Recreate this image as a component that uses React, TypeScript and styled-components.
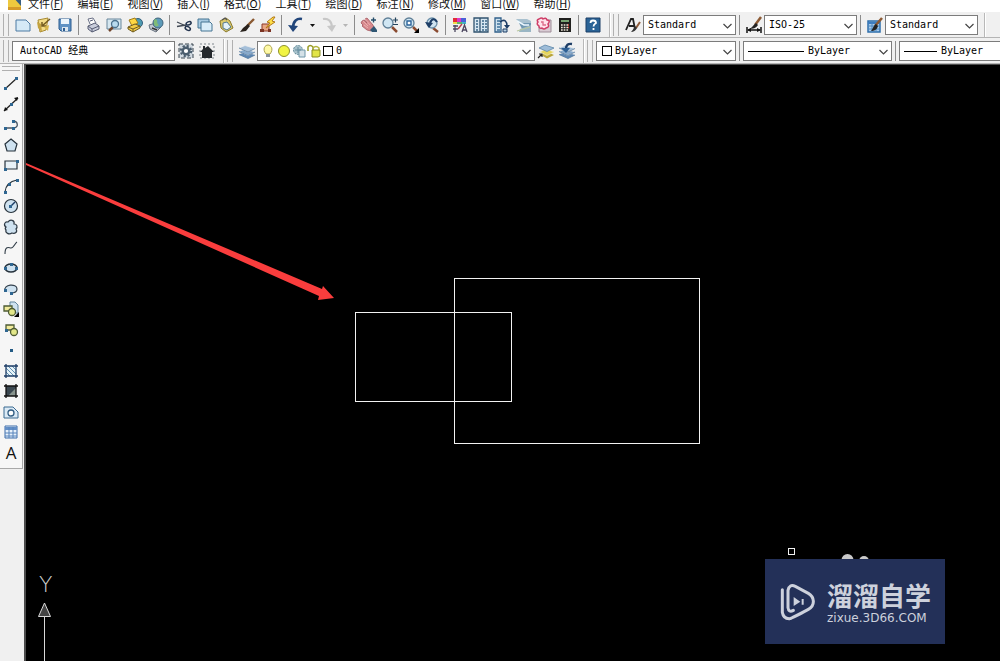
import React from 'react';
import styled, { createGlobalStyle } from 'styled-components';

const GlobalStyle = createGlobalStyle`
  body { margin: 0; background: #f0f0f0; }
  * { box-sizing: border-box; }
`;

const mono = `"DejaVu Sans Mono", "Noto Sans CJK SC", monospace`;
const sans = `"Open Sans", "Noto Sans CJK SC", sans-serif`;

const Window = styled.div`
  display: flex;
  flex-direction: column;
  height: 100vh;
  overflow: hidden;
  background: #f0f0f0;
  color: #000;
  font-family: ${sans};
`;

const MenuBar = styled.nav`
  display: flex;
  align-items: flex-end;
  flex: none;
  gap: 14px;
  height: 12px;
  padding: 0 8px 2px;
  overflow: hidden;
  background: #fff;
`;

const MenuItem = styled.button`
  flex: none;
  padding: 0;
  border: 0;
  background: none;
  color: #111;
  font: 11px/14px "Noto Sans CJK SC", sans-serif;
  white-space: nowrap;
`;

const AppIcon = styled.svg`
  flex: none;
  width: 13px;
  height: 14px;
  margin-right: -7px;
`;

const ToolRow = styled.div`
  display: flex;
  flex: none;
  height: 26px;
  padding-top: 1px;
  border-bottom: 1px solid #b4b4b4;
  overflow: hidden;
`;

const Group = styled.div`
  display: flex;
  align-items: center;
  flex: none;
  padding: 0 6px 0 3px;
  border-right: 1px solid #b8b8b8;
  box-shadow: 1px 0 #fff;
`;

const Grip = styled.span<{ $flat?: boolean }>`
  flex: none;
  width: ${p => (p.$flat ? '18px' : '6px')};
  height: ${p => (p.$flat ? '5px' : '22px')};
  margin: ${p => (p.$flat ? '2px' : '0 3px 0 0')};
  border: solid #b0b0b0;
  border-width: ${p => (p.$flat ? '1px 0' : '0 1px')};
`;

const Divider = styled.span`
  flex: none;
  width: 1px;
  height: 20px;
  margin: 0 3px;
  background: #8c8c8c;
`;

const ToolButton = styled.button<{ $narrow?: boolean }>`
  display: flex;
  align-items: center;
  justify-content: center;
  flex: none;
  width: ${p => (p.$narrow ? '12px' : '21px')};
  height: 22px;
  padding: 0;
  border: 0;
  background: none;
`;

const Icon = styled.svg`
  display: block;
  flex: none;
  width: 16px;
  height: 16px;
  overflow: visible;
`;

const Combo = styled.div<{ $w: number }>`
  position: relative;
  display: flex;
  align-items: center;
  flex: none;
  width: ${p => p.$w}px;
  height: 20px;
  padding-left: 4px;
  border: 1px solid #7c7c7c;
  background: #fff;
`;

const ComboSelect = styled.select<{ $indent?: number }>`
  flex: 1;
  min-width: 0;
  height: 18px;
  padding: 0 0 0 ${p => p.$indent || 0}px;
  border: 0;
  outline: 0;
  appearance: none;
  background: none;
  color: #000;
  font: 10px/18px ${mono};
`;

const Chevron = styled.svg`
  position: absolute;
  right: 3px;
  top: 6px;
  width: 9px;
  height: 8px;
  pointer-events: none;
`;

const LineSample = styled.span<{ $w: number }>`
  flex: none;
  width: ${p => p.$w}px;
  height: 1px;
  margin-right: 4px;
  background: #000;
`;

const Swatch = styled.span`
  flex: none;
  width: 10px;
  height: 10px;
  margin: 0 3px 0 1px;
  border: 1px solid #000;
`;

const LayerIcon = styled.svg`
  flex: none;
  width: 14px;
  height: 14px;
  margin-right: 1px;
`;

const Work = styled.main`
  display: flex;
  flex: 1;
  min-height: 0;
`;

const Side = styled.aside`
  flex: none;
  width: 26px;
  border-right: 2px solid #4c4c4c;
`;

const DrawBar = styled.div`
  display: flex;
  flex-direction: column;
  width: 23px;
  padding-bottom: 5px;
  border: solid #a8a8a8;
  border-width: 0 1px 1px 0;
  background: #f6f6f6;
`;

const DrawList = styled.div`
  display: flex;
  flex-direction: column;
  height: 390px;
`;

const DrawButton = styled.button`
  display: flex;
  align-items: center;
  justify-content: center;
  flex: 1;
  min-height: 0;
  padding: 0;
  border: 0;
  background: none;
  font: 17px/20px ${sans};
  color: #111;
`;

const Canvas = styled.section`
  position: relative;
  flex: 1;
  min-width: 0;
  border-top: 1px solid #4c4c4c;
  background: #000;
  overflow: hidden;
`;

const Drawing = styled.svg`
  position: absolute;
  inset: 0;
  width: 100%;
  height: 100%;
`;

const Watermark = styled.div`
  position: absolute;
  right: 55px;
  bottom: 17px;
  display: flex;
  align-items: center;
  gap: 12px;
  width: 180px;
  height: 85px;
  padding-left: 15px;
  background: #233058;
  color: #cdd1dc;
`;

const Logo = styled.svg`
  flex: none;
  width: 35px;
  height: 38px;
`;

const BrandBlock = styled.div`
  padding-bottom: 4px;
`;

const Brand = styled.div`
  font: 700 26px/38px "Noto Sans CJK SC", sans-serif;
  white-space: nowrap;
`;

const Site = styled.div`
  margin-top: -2px;
  font: 12px/12px "DejaVu Sans", sans-serif;
`;

const navy = '#1d3d66';
const steel = '#3f719c';
const pale = '#cfe2f0';

const page = <path d="M1 3h10l4 4v7H1z" fill="#d5e9f6" stroke="#4d7ba3" />;
const lens = (
  <>
    <path d="M10 10l5 5" stroke="#8a4a30" strokeWidth="2.5" />
    <circle cx="6" cy="6" r="5" fill="#d0e6f3" stroke="#5f7f97" strokeWidth="1.3" />
  </>
);
const stack = (
  <>
    <path d="M0 11.500l6-2.500 10 3-7 3.500z" fill="#5c86b4" />
    <path d="M0 8.500L6 6l10 3-7 3.500z" fill="#86a9cc" stroke="#f0f0f0" strokeWidth=".7" />
    <path d="M0 5l6-2.500 10 3L9 9z" fill="#a4bfd9" stroke="#f0f0f0" strokeWidth=".7" />
    <path d="M0 5l9 4 7-3.500M0 8.500l9 4L16 9M0 11.500l9 4 7-3.500" stroke="#4f7599" strokeWidth=".8" />
  </>
);
const brush = (
  <>
    <path d="M15 1L8 9" stroke="#8c5a34" strokeWidth="2.5" />
    <path d="M9 7l2 2c-1 4-4 5-7 5 2-2 2-5 5-7z" fill="#222" />
  </>
);

const icons: Record<string, React.ReactNode> = {
  new: page,
  open: (
    <>
      <path d="M2 3l10-2-2 12-6 2z" fill="#f3dc87" stroke="#a88a32" />
      <path d="M1 5l4 2 1 8-4-4z" fill="#c4a23e" />
      <path d="M14 2L6 9m0-4v4h4" stroke="#735b20" fill="none" strokeWidth="1.5" />
      <path d="M8 10l5-2-1 6z" fill="#d8b74c" />
    </>
  ),
  save: (
    <>
      <path d="M2 2h12v12H4l-2-2z" fill="#5e92c4" stroke="#2c5c90" />
      <path d="M4 2h8v5H4z" fill="#eaf4fb" />
      <path d="M5 10h6v4H5z" fill="#dbe7f0" />
      <path d="M6 11h2v3H6z" fill="#2c5c90" />
    </>
  ),
  print: (
    <>
      <path d="M5 7L3 2l5-1 3 5" fill="#fff" stroke="#6b7187" />
      <path d="M3 9l7-3 4 3v3l-7 3-4-3z" fill="#c9cddb" stroke="#565c73" />
      <path d="M3 9l4 3 7-3M7 12v3M5 4l3-1" fill="none" stroke="#565c73" />
    </>
  ),
  preview: (
    <>
      <path d="M1 2h14v10H1z" fill="#d6e7f0" stroke="#68879c" />
      <path d="M3 14l4-4" stroke="#70452c" strokeWidth="2.5" />
      <circle cx="9" cy="7" r="3.5" fill="#b8daee" stroke="#4c718d" strokeWidth="1.3" />
    </>
  ),
  publish: (
    <>
      <circle cx="11" cy="6" r="4.5" fill="#4e9bb2" stroke="#345f7c" />
      <path d="M2 3l6-2 3 5-6 3z" fill="#ffd743" stroke="#a07c17" />
      <path d="M1 10l7-3 5 2v2l-7 4-5-3z" fill="#f4cd44" stroke="#6e5a20" />
      <path d="M1 10l5 2 7-3M6 12v3" fill="none" stroke="#6e5a20" />
    </>
  ),
  globe: (
    <>
      <path d="M1 8l7-2 5 4-5 5-6-3z" fill="#c1c8d0" stroke="#68727f" />
      <circle cx="10" cy="6" r="5" fill="#5d9bb9" stroke="#40647c" />
      <path d="M7 2c4 1 1 3 3 5s-2 3-3 2-2-5 0-7z" fill="#80bb76" />
      <path d="M4 11l5 2" stroke="#333" strokeWidth="1.5" />
    </>
  ),
  cut: (
    <>
      <path d="M1 5l9 4M1 9.500l9-1.500" stroke="#424a55" strokeWidth="1.3" />
      <ellipse cx="12" cy="11.500" rx="2.800" ry="1.700" fill="none" stroke="#24354f" strokeWidth="1.500" transform="rotate(30 12 11)" />
      <ellipse cx="12.500" cy="6.500" rx="2.600" ry="1.500" fill="none" stroke="#24354f" strokeWidth="1.500" transform="rotate(-20 12 6)" />
    </>
  ),
  copy: (
    <>
      <path d="M1 2h11v9H1z" fill="#a9cbe2" stroke="#457593" />
      <path d="M4 5h9l2 2v7H4z" fill="#d9edf9" stroke="#457593" />
    </>
  ),
  paste: (
    <>
      <path d="M2 4l6-3 4 3 3 7-7 4-5-4z" fill="#dbc96c" stroke="#8a792c" />
      <path d="M5 6l4-1 4 5-4 3-4-2z" fill="#e4f2f8" stroke="#547b91" />
      <path d="M4 3l3-2 2 2" fill="none" stroke="#555" strokeWidth="1.3" />
    </>
  ),
  match: (
    <>
      <path d="M15 2L8 9" stroke="#8a5932" strokeWidth="2.4" />
      <path d="M9 7l2 2-4 5-6 1 3-4z" fill="#28221c" />
    </>
  ),
  block: (
    <>
      <path d="M2 7h7v7H2z" fill="#e8a584" stroke="#8c3a28" />
      <path d="M13 0L7 5l3 1-4 5 9-6-3-1 3-4z" fill="#ffe04a" stroke="#b17818" />
      <path d="M0 12h4v3H0zM8 12h3v3H8z" fill="#7b3424" />
    </>
  ),
  undo: (
    <>
      <path d="M14 2C9 1 5 4 5 11" fill="none" stroke="#21457a" strokeWidth="2.6" />
      <path d="M0 8l5 7 5-6z" fill="#21457a" />
    </>
  ),
  redo: (
    <>
      <path d="M2 2c5-1 9 2 9 9" fill="none" stroke="#c7c7c7" strokeWidth="2.2" />
      <path d="M6 9l5 6 4-7z" fill="#c7c7c7" />
    </>
  ),
  pan: (
    <>
      <path d="M1 4l2-1 3 3-2-4 2-1 6 7 1 3-3 3-4-1-5-4 1-1-2-2z" fill="#d6898d" stroke="#a4585f" strokeWidth=".8" />
      <path d="M2 4l5 5M4 2l5 6M3 8l4 3" stroke="#f0b7b6" strokeWidth=".8" />
      <path d="M9 13l4-4 3 4v2h-5z" fill="#2f5673" />
      <path d="M10 3h5M12.500 .5v5" stroke="#254d6a" strokeWidth="1.400" />
    </>
  ),
  zoom: (
    <>
      {lens}
      <path d="M11 3h5M13.500 .5v5M11 7.500h5" stroke="#24445d" strokeWidth="1.200" />
    </>
  ),
  zoomWindow: (
    <>
      {lens}
      <path d="M4 4h4v4H4z" fill="#fff" stroke="#2d649b" strokeWidth="1.400" />
      <path d="M16 11v5h-5z" fill="#000" />
    </>
  ),
  zoomPrev: (
    <>
      <path d="M9 11l5 4" stroke="#8a4a30" strokeWidth="2.500" />
      <circle cx="8" cy="6" r="5" fill="#cfe3f0" stroke="#6c90aa" strokeWidth="1.300" />
      <path d="M13 5Q9-1 6 6" fill="none" stroke={navy} strokeWidth="2.200" />
      <path d="M1 5l8 1-4 5z" fill={navy} />
    </>
  ),
  props: (
    <>
      <path d="M1 1h4v4H1z" fill="#e32c38" />
      <path d="M5 1h4v4H5z" fill="#d93ac7" />
      <path d="M9 1h5v4H9z" fill="#4a60d7" />
      <path d="M1 5h4v2H1z" fill="#f0d84a" />
      <path d="M5 5h5v2H5z" fill="#62b769" />
      <path d="M10 5h4v2h-4z" fill="#3fb7c6" />
      <path d="M1 9h5M1 12h5M3 8v7M10 15l2.500-7 2.500 7M11 13h3" fill="none" stroke="#4d4760" strokeWidth="1.3" />
      <path d="M6 12l4-5" stroke="#b54052" strokeWidth="1.5" />
    </>
  ),
  design: (
    <>
      <path d="M1 1h14v14H1z" fill="#d6e6f1" stroke="#31536f" strokeWidth="1.300" />
      <path d="M7 1v14" stroke="#31536f" strokeWidth="1.300" />
      <path d="M3 4h3M3 7h3M3 10h3M3 13h3M9 4h5M9 7h5M9 10h5M9 13h5" stroke="#3a6587" strokeWidth="1.600" strokeDasharray="2 1" />
    </>
  ),
  palettes: (
    <>
      <path d="M1 1h6v14H1z" fill="#cfe2ef" stroke="#31608a" strokeWidth="1.300" />
      <path d="M3 4h3M3 7h3M3 10h3M3 13h3" stroke={steel} strokeWidth="1.600" />
      <path d="M6 5c5-4 7 0 7 4" fill="none" stroke={navy} strokeWidth="1.600" />
      <path d="M10 8h6l-3 4z" fill={navy} />
      <path d="M9 12h4v3H9z" fill="#b8d1e1" stroke={navy} />
    </>
  ),
  sheets: (
    <>
      <path d="M1 2h11l4 2v5H7z" fill="#a9c1cf" />
      <path d="M4 6h12v3L7 12z" fill="#6f97b1" />
      <path d="M5 12l11-4v7H4z" fill="#9ab6c4" />
      <path d="M2 4l7 4h5" stroke="#eff9ff" strokeWidth="1.500" />
      <path d="M2 14l13-4" stroke="#b8c7a0" strokeWidth="1.300" />
    </>
  ),
  markup: (
    <>
      <path d="M3 3h12v12H3z" fill="#d9cbd3" stroke="#9e8d98" />
      <path d="M3 2q3-2 4 0 3-2 4 1 4 0 1 4 2 3-2 4-2 2-4 0-3 1-3-2-3-2-1-4-2-2 1-3z" fill="#ffe1ea" stroke="#cf3d67" strokeWidth="1.500" />
      <path d="M5 5h2v3h3" fill="none" stroke="#dc6b89" strokeWidth="1.300" />
    </>
  ),
  calc: (
    <>
      <path d="M2 1h12v14H2z" fill="#20201e" />
      <path d="M4 3h8v2H4z" fill="#78a573" />
      <path d="M4 8h8M4 10.500h8M4 13h8" stroke="#efe9dc" strokeWidth="1.300" strokeDasharray="1.700 1" />
      <path d="M11 8h1M11 10.500h1" stroke="#ea463d" strokeWidth="1.500" />
    </>
  ),
  help: (
    <>
      <path d="M1 1h14v14H1z" fill="#2a6396" stroke="#1b3f67" />
      <path d="M5.500 6q0-2.500 2.500-2.500 3 0 3 2.500-2.500 1.500-2.500 3.500M8.500 11v2" fill="none" stroke="#fff" strokeWidth="1.800" />
    </>
  ),
  textStyle: (
    <>
      <path d="M1 13L6 2h2l2 10M4 9h6" fill="none" stroke="#222" strokeWidth="1.800" />
      <path d="M15 5l-4 6" stroke="#8e5b39" strokeWidth="2" />
      <path d="M10 9l2 2q-2 4-6 4 2-2 4-6z" fill="#333" />
    </>
  ),
  dimStyle: (
    <>
      <path d="M15 0L9 8" stroke="#8c5a34" strokeWidth="2.500" />
      <path d="M10 6l2 2c-2 3-5 4-9 4 3-1 4-4 7-6z" fill="#222" />
      <path d="M1 10v6M15 10v6M2 13h12" stroke="#111" strokeWidth="1.500" />
      <path d="M1 13l4-2v4zM15 13l-4-2v4z" fill="#111" />
    </>
  ),
  tableStyle: (
    <>
      <path d="M1 4h12v11H1z" fill="#a9cbea" stroke="#2e6fac" strokeWidth="1.500" />
      <path d="M1 5h12v2H1z" fill="#3c7cc0" />
      <path d="M1 9h12M1 12h12M5 6v9M9 6v9" stroke="#4b86c0" />
      {brush}
    </>
  ),
  gear: (
    <>
      <path d="M1 1h14v14H1z" fill="#d2dae1" stroke="#39444e" strokeDasharray="4 2" />
      <circle cx="8" cy="8" r="5.200" stroke="#4a5d6e" strokeWidth="2" strokeDasharray="2.200 1.880" />
      <circle cx="8" cy="8" r="3.300" fill="#fff" stroke="#4a5d6e" strokeWidth="2.400" />
    </>
  ),
  home: (
    <>
      <path d="M1 1h14v14H1z" fill="none" stroke="#7f868c" strokeDasharray="2 2" />
      <path d="M1 9l3-3V3h2v2l3-2 6 6h-2v6H3V9z" fill="#25292d" />
    </>
  ),
  layers: stack,
  layerCurrent: (
    <>
      <path d="M3 12l6-3 7 3-7 3.500z" fill="#b9a53a" />
      <path d="M2 9l6-3 8 3-7 3.500z" fill="#e6d55c" stroke="#f4f0c8" strokeWidth=".6" />
      <path d="M1 5l6-3 9 3-7 3.500z" fill="#9dbcd8" stroke="#5d86a8" strokeWidth=".8" />
      <path d="M0 15l4-4M1 11h3v3" stroke="#222" fill="none" strokeWidth="1.200" />
    </>
  ),
  layerPrev: (
    <>
      {stack}
      <path d="M13 1Q7 0 7 6" stroke={navy} strokeWidth="2.300" fill="none" />
      <path d="M2 5h9l-4 5z" fill="#2d5f94" />
    </>
  ),
};

const node = (x: number, y: number) => <rect x={x - 1} y={y - 1} width="3" height="3" fill="#2f6691" />;

const drawTools: [string, React.ReactNode][] = [
  ['直线', <><path d="M2 14L14 3" stroke="#222" strokeWidth="1.200" />{node(2, 13)}{node(13, 3)}</>],
  ['构造线', <><path d="M1 15L15 2" stroke="#222" strokeWidth="1.300" /><path d="M1 15l1-4 3 3zM15 1l-4 1 3 3z" fill="#111" />{node(8, 8)}</>],
  ['多段线', <><path d="M2 12h9c5-1 4-7-1-7" fill="none" stroke="#485461" strokeWidth="1.300" />{node(2, 12)}{node(10, 12)}{node(10, 5)}</>],
  ['多边形', <path d="M8 2l6 5-2 7H4L2 7z" fill={pale} stroke="#26323c" strokeWidth="1.200" />],
  ['矩形', <><path d="M2 4h12v8H2z" fill="#e8f1f7" stroke="#26323c" strokeWidth="1.200" />{node(2, 12)}{node(14, 4)}</>],
  ['圆弧', <><path d="M2 14Q3 4 14 2" fill="none" stroke="#26323c" strokeWidth="1.200" />{node(2, 14)}{node(6, 6)}{node(14, 2)}</>],
  ['圆', <><circle cx="8" cy="8" r="6.500" fill={pale} stroke="#26323c" strokeWidth="1.200" /><path d="M8 8l4-4" stroke={navy} strokeWidth="1.500" />{node(7, 8)}</>],
  ['修订云线', <path d="M3 8c-3-2-1-6 2-5 2-3 7-2 6 2 3 0 4 3 2 5 2 3-1 5-4 4-3 2-7 0-6-3-1-1-1-2 0-3z" fill={pale} stroke="#303c47" strokeWidth="1.200" />],
  ['样条曲线', <path d="M2 14c0-9 4-6 6-6 3 0 4-5 6-6" fill="none" stroke="#303c47" strokeWidth="1.100" />],
  ['椭圆', <><ellipse cx="8" cy="8" rx="6" ry="4" fill={pale} stroke="#26323c" strokeWidth="1.500" />{node(2, 8)}{node(13, 8)}{node(8, 4)}</>],
  ['椭圆弧', <><path d="M2 10c-2-7 12-8 12-2 0 3-3 4-6 4" fill={pale} stroke="#35424e" strokeWidth="1.200" />{node(2, 9)}{node(8, 12)}</>],
  ['插入块', <><path d="M7 1h5l3 3v8H7z" fill={pale} stroke="#61859d" /><path d="M1 5h8v5H1z" fill="#f1eb9c" stroke="#4d5b34" strokeWidth="1.300" /><circle cx="9" cy="11" r="3.500" fill="#e2e789" stroke="#4d5b34" strokeWidth="1.300" /><path d="M16 11v5h-5z" fill="#000" /></>],
  ['创建块', <><path d="M3 3h8v5H3z" fill="#f1eb9c" stroke="#4d5b34" strokeWidth="1.300" /><circle cx="11" cy="10" r="3.500" fill="#e2e789" stroke="#4d5b34" strokeWidth="1.300" />{node(3, 8)}</>],
  ['点', <rect x="7" y="7" width="3" height="3" fill="#245b85" />],
  ['图案填充', <><path d="M3 3h10v10H3z" fill="#e7f2f8" /><path d="M3 5l8 8M3 9l4 4M5 3l8 8M9 3l4 4" stroke="#5f91b1" /><path d="M1 3h14M1 13h14M3 1v14M13 1v14" stroke={navy} strokeWidth="1.300" /></>],
  ['渐变色', <><path d="M3 3h10v10H3z" fill="#3a4750" /><path d="M13 5v8H5z" fill="#87938d" /><path d="M1 3h14M1 13h14M3 1v14M13 1v14" stroke="#111" strokeWidth="1.300" /></>],
  ['面域', <><path d="M1 3h9l5 5v6H1z" fill="#dbeaf6" stroke="#3b6a91" /><circle cx="8" cy="9" r="3" fill="#fff" stroke="#315d83" strokeWidth="1.300" /></>],
  ['表格', <><path d="M2 2h12v12H2z" fill="#e7f1fb" stroke="#3c6daa" /><path d="M2 3h12v3H2z" fill="#638fc8" /><path d="M2 9h12M2 12h12M6 3v11M10 3v11" stroke="#5683bb" /></>],
  ['多行文字', 'A'],
];

const Glyph = ({ name }: { name: string }) => (
  <Icon viewBox="0 0 16 16" fill="none" aria-hidden="true">{icons[name]}</Icon>
);

const Tool = ({ name, label }: { name: string; label: string }) => (
  <ToolButton type="button" aria-label={label} title={label}><Glyph name={name} /></ToolButton>
);

const Drop = ({ label, color }: { label: string; color: string }) => (
  <ToolButton type="button" $narrow aria-label={label}>
    <svg width="5" height="3" aria-hidden="true"><path d="M0 0h5L2.500 3z" fill={color} /></svg>
  </ToolButton>
);

interface PickerProps {
  label: string;
  value: string;
  width: number;
  indent?: number;
  children?: React.ReactNode;
}

const Picker = ({ label, value, width, indent, children }: PickerProps) => (
  <Combo $w={width}>
    {children}
    <ComboSelect aria-label={label} $indent={indent} defaultValue={value}>
      <option>{value}</option>
    </ComboSelect>
    <Chevron viewBox="0 0 9 8" aria-hidden="true">
      <path d="M.5 2l4 4 4-4" fill="none" stroke="#444" strokeWidth="1.200" />
    </Chevron>
  </Combo>
);

const standardTools: [string, string][][] = [
  [['new', '新建'], ['open', '打开'], ['save', '保存']],
  [['print', '打印'], ['preview', '打印预览'], ['publish', '发布'], ['globe', '三维 DWF']],
  [['cut', '剪切'], ['copy', '复制'], ['paste', '粘贴'], ['match', '特性匹配'], ['block', '块编辑器']],
];
const viewTools: [string, string][][] = [
  [['pan', '平移'], ['zoom', '缩放'], ['zoomWindow', '窗口缩放'], ['zoomPrev', '缩放上一个']],
  [['props', '特性'], ['design', '设计中心'], ['palettes', '工具选项板'], ['sheets', '图纸集'], ['markup', '标记集'], ['calc', '计算器']],
];

const ToolSets = ({ sets }: { sets: [string, string][][] }) => (
  <>
    {sets.map((set, i) => (
      <React.Fragment key={i}>
        {set.map(([name, label]) => <Tool key={name} name={name} label={label} />)}
        <Divider />
      </React.Fragment>
    ))}
  </>
);

const menus = [['文件', 'F'], ['编辑', 'E'], ['视图', 'V'], ['插入', 'I'], ['格式', 'O'], ['工具', 'T'], ['绘图', 'D'], ['标注', 'N'], ['修改', 'M'], ['窗口', 'W'], ['帮助', 'H']];

export default function App() {
  return (
    <Window>
      <GlobalStyle />
      <MenuBar>
        <AppIcon viewBox="0 0 13 14" aria-hidden="true">
          <path d="M0 0h13v14H0z" fill="#eec93e" />
          <path d="M4 0l9 10V0z" fill="#385e82" />
          <path d="M0 11h13v3H0z" fill="#d59a29" />
        </AppIcon>
        {menus.map(([text, key]) => (
          <MenuItem type="button" key={key}>{text}(<u>{key}</u>)</MenuItem>
        ))}
      </MenuBar>

      <ToolRow>
        <Group>
          <Grip />
          <ToolSets sets={standardTools} />
          <Tool name="undo" label="放弃" />
          <Drop label="放弃列表" color="#111" />
          <Tool name="redo" label="重做" />
          <Drop label="重做列表" color="#b5b5b5" />
          <Divider />
          <ToolSets sets={viewTools} />
          <Tool name="help" label="帮助" />
        </Group>
        <Group>
          <Grip />
          <Tool name="textStyle" label="文字样式" />
          <Picker label="文字样式" value="Standard" width={93} />
          <Divider />
          <Tool name="dimStyle" label="标注样式" />
          <Picker label="标注样式" value="ISO-25" width={93} />
          <Divider />
          <Tool name="tableStyle" label="表格样式" />
          <Picker label="表格样式" value="Standard" width={93} />
        </Group>
      </ToolRow>

      <ToolRow>
        <Group>
          <Grip />
          <Picker label="工作空间" value="AutoCAD 经典" width={163} indent={3} />
          <Tool name="gear" label="工作空间设置" />
          <Tool name="home" label="我的工作空间" />
        </Group>
        <Group>
          <Grip />
          <Tool name="layers" label="图层特性管理器" />
          <Picker label="图层" value="0" width={278}>
            <LayerIcon viewBox="0 0 14 14" aria-hidden="true">
              <path d="M4 10C0 5 3 1 6 1s6 4 2 9z" fill="#fffaa6" stroke="#aaa24e" />
              <path d="M4 10h4v3H4z" fill="#89939d" />
            </LayerIcon>
            <LayerIcon viewBox="0 0 14 14" aria-hidden="true">
              <circle cx="7" cy="7" r="5.500" fill="#f1f443" stroke="#8e912d" />
            </LayerIcon>
            <LayerIcon viewBox="0 0 14 14" aria-hidden="true">
              <circle cx="6" cy="6" r="4.500" fill="#a8c2cc" stroke="#5f8796" strokeDasharray="2 1" />
              <path d="M7 6h6v7H7z" fill="#d4e1e7" stroke="#6f96a8" />
              <path d="M3 6h6M6 3v6" stroke="#638b9d" />
            </LayerIcon>
            <LayerIcon viewBox="0 0 14 14" aria-hidden="true">
              <path d="M1 7V3q2-3 5 0v4" fill="none" stroke="#989a26" strokeWidth="1.500" />
              <path d="M6 4q3-3 6 0v4" fill="none" stroke="#b3b53a" strokeWidth="1.500" />
              <path d="M5 6h8v6l-2 1H5z" fill="#e2e447" stroke="#898b20" />
            </LayerIcon>
            <Swatch />
          </Picker>
          <Tool name="layerCurrent" label="将对象的图层置为当前" />
          <Tool name="layerPrev" label="上一个图层" />
        </Group>
        <Group>
          <Grip />
          <Picker label="颜色" value="ByLayer" width={140}><Swatch /></Picker>
          <Divider />
          <Picker label="线型" value="ByLayer" width={149}><LineSample $w={56} /></Picker>
          <Divider />
          <Picker label="线宽" value="ByLayer" width={149}><LineSample $w={33} /></Picker>
        </Group>
      </ToolRow>

      <Work>
        <Side>
          <DrawBar>
            <Grip $flat />
            <DrawList>
              {drawTools.map(([label, art]) => (
                <DrawButton type="button" key={label} aria-label={label} title={label}>
                  {typeof art === 'string' ? art : <Icon viewBox="0 0 16 16" fill="none" aria-hidden="true">{art}</Icon>}
                </DrawButton>
              ))}
            </DrawList>
          </DrawBar>
        </Side>
        <Canvas aria-label="绘图区">
          <Drawing aria-hidden="true">
            <g transform="translate(-26 -65)" fill="none" stroke="#f2f2f2">
              <rect x="355.500" y="312.500" width="156" height="89" />
              <rect x="454.500" y="278.500" width="245" height="165" />
              <rect x="788.500" y="548.500" width="6" height="6" />
              <path d="M26 163L322 289l1-3 11 12-16 2 1-4L26 165z" fill="#fa3d3d" stroke="none" />
              <circle cx="847.500" cy="560" r="6" fill="#c9c9c9" stroke="none" />
              <circle cx="864" cy="561" r="5" fill="#c9c9c9" stroke="none" />
              <path d="M44.500 617V2000M44.500 603l-6 13.500h12z" fill="#444" stroke="#d8d8d8" />
              <text x="39" y="592" fill="#d0d0d0" stroke="none" fontFamily="DejaVu Sans, sans-serif" fontWeight="200" fontSize="22">Y</text>
            </g>
          </Drawing>
          <Watermark>
            <Logo viewBox="88 158 105 114" fill="none" aria-hidden="true">
              <path d="M95 178v68q3 20 22 19 8-2 56-28 16-9 15-25-1-15-15-23l-39-21q-18-8-22 12v52q2 16 16 8" stroke="#cdd1dc" strokeWidth="9" strokeLinecap="round" />
              <path d="M129 200l20 14-20 13zM153 206h6v17h-6z" fill="#cdd1dc" />
            </Logo>
            <BrandBlock>
              <Brand>溜溜自学</Brand>
              <Site>zixue.3D66.COM</Site>
            </BrandBlock>
          </Watermark>
        </Canvas>
      </Work>
    </Window>
  );
}
